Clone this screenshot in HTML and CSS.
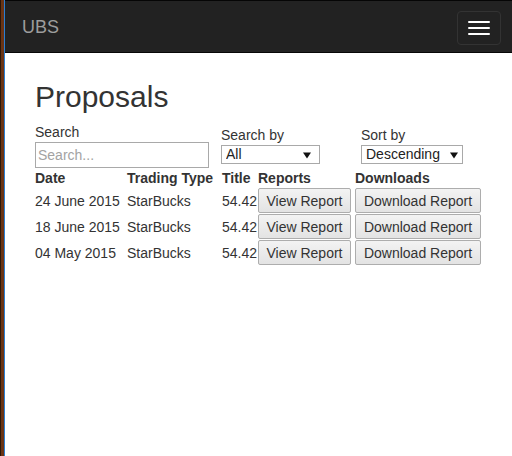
FILE: index.html
```html
<!DOCTYPE html>
<html>
<head>
<meta charset="utf-8">
<title>UBS Proposals</title>
<link rel="stylesheet" href="styles.css">
</head>
<body>
<div class="frame">
  <div class="edge"></div>
  <div class="page">
    <nav class="navbar">
      <span class="brand">UBS</span>
      <button class="toggle" type="button" aria-label="Menu">
        <span class="bar"></span><span class="bar"></span><span class="bar"></span>
      </button>
    </nav>
    <main class="content">
      <h1 class="title">Proposals</h1>
      <div class="filters">
        <div class="field field-search">
          <label class="lbl">Search</label>
          <input class="search-input" type="text" placeholder="Search...">
        </div>
        <div class="field field-by">
          <label class="lbl">Search by</label>
          <select class="sel sel-by"><option>All</option></select>
        </div>
        <div class="field field-sort">
          <label class="lbl">Sort by</label>
          <select class="sel sel-sort"><option>Descending</option></select>
        </div>
      </div>
      <table class="grid">
        <colgroup>
          <col class="c-date"><col class="c-type"><col class="c-title"><col class="c-rep"><col class="c-dl">
        </colgroup>
        <thead>
          <tr><th>Date</th><th>Trading Type</th><th>Title</th><th>Reports</th><th>Downloads</th></tr>
        </thead>
        <tbody>
          <tr><td>24 June 2015</td><td>StarBucks</td><td>54.42</td><td><button class="btn btn-view">View Report</button></td><td><button class="btn btn-dl">Download Report</button></td></tr>
          <tr><td>18 June 2015</td><td>StarBucks</td><td>54.42</td><td><button class="btn btn-view">View Report</button></td><td><button class="btn btn-dl">Download Report</button></td></tr>
          <tr><td>04 May 2015</td><td>StarBucks</td><td>54.42</td><td><button class="btn btn-view">View Report</button></td><td><button class="btn btn-dl">Download Report</button></td></tr>
        </tbody>
      </table>
    </main>
  </div>
</div>
</body>
</html>
```

FILE: styles.css
```css
html, body {
  margin: 0;
  padding: 0;
  height: 100%;
  background: #fff;
}
body {
  font-family: "Liberation Sans", Arial, sans-serif;
  font-size: 14px;
  color: #333;
}
.frame {
  display: flex;
  min-height: 456px;
}
.edge {
  width: 4px;
  flex: 0 0 4px;
  background: linear-gradient(90deg, #2a1608 0 1px, #6a3415 1px 4px);
  border-right: 1px solid #2a7fd4;
}
.page {
  flex: 1;
  min-width: 0;
}
.navbar {
  box-sizing: border-box;
  height: 53px;
  background: #222;
  border-top: 1px solid #050505;
  border-bottom: 1px solid #080808;
  display: flex;
  align-items: center;
  justify-content: space-between;
  padding: 0 11px 0 17px;
}
.brand {
  color: #9d9d9d;
  font-size: 18px;
  line-height: 20px;
}
.toggle {
  box-sizing: border-box;
  width: 44px;
  height: 34px;
  margin-top: 2px;
  background: transparent;
  border: 1px solid #333;
  border-radius: 4px;
  padding: 0;
  display: flex;
  flex-direction: column;
  align-items: center;
  justify-content: center;
  gap: 4px;
}
.bar {
  display: block;
  width: 22px;
  height: 2px;
  background: #fff;
  border-radius: 1px;
}
.content {
  padding: 27px 0 0 30px;
}
.title {
  margin: 0;
  font-size: 30px;
  font-weight: normal;
  line-height: 33px;
  color: #333;
}
.filters {
  display: flex;
  align-items: flex-start;
  margin-top: 9px;
}
.field {
  display: flex;
  flex-direction: column;
  align-items: flex-start;
}
.field-search { width: 186px; }
.field-by { width: 140px; margin-top: 3px; }
.field-sort { margin-top: 3px; }
.lbl {
  line-height: 20px;
  font-size: 14px;
}
.search-input {
  box-sizing: border-box;
  width: 174px;
  height: 26px;
  margin-top: 0;
  border: 1px solid #a9a9a9;
  padding: 0 2px;
  font-family: "Liberation Sans", Arial, sans-serif;
  font-size: 14px;
  color: #333;
  background: #fff;
  outline: none;
  border-radius: 0;
}
.search-input::placeholder {
  color: #a3a3a3;
}
.sel {
  box-sizing: border-box;
  height: 19px;
  margin-top: 0;
  border: 1px solid #a9a9a9;
  border-radius: 0;
  padding: 0 0 0 4px;
  font-family: "Liberation Sans", Arial, sans-serif;
  font-size: 14px;
  line-height: 17px;
  color: #222;
  -webkit-appearance: none;
  appearance: none;
  background: #fff url("data:image/svg+xml,%3Csvg xmlns='http://www.w3.org/2000/svg' width='8' height='7'%3E%3Cpath d='M0 0.5H8L4 6.5Z' fill='%23111'/%3E%3C/svg%3E") no-repeat;
}
.sel-by { width: 99px; background-position: 81px 6px; }
.sel-sort { width: 102px; background-position: 88px 6px; }
.grid {
  border-collapse: collapse;
  table-layout: fixed;
  width: 447px;
  margin-top: 0;
}
.c-date { width: 92px; }
.c-type { width: 95px; }
.c-title { width: 36px; }
.c-rep { width: 97px; }
.c-dl { width: 127px; }
.grid th {
  text-align: left;
  font-weight: bold;
  padding: 0;
  height: 20px;
  line-height: 20px;
  white-space: nowrap;
}
.grid td {
  padding: 0 0 1px 0;
  white-space: nowrap;
  vertical-align: middle;
  line-height: 20px;
}
.btn {
  box-sizing: border-box;
  height: 25px;
  padding: 0;
  border: 1px solid #adadad;
  border-radius: 2px;
  background: linear-gradient(#f3f3f3, #e3e3e3);
  color: #333;
  font-family: "Liberation Sans", Arial, sans-serif;
  font-size: 14px;
  text-align: center;
  display: block;
}
.btn-view { width: 93px; }
.btn-dl { width: 126px; }
```
